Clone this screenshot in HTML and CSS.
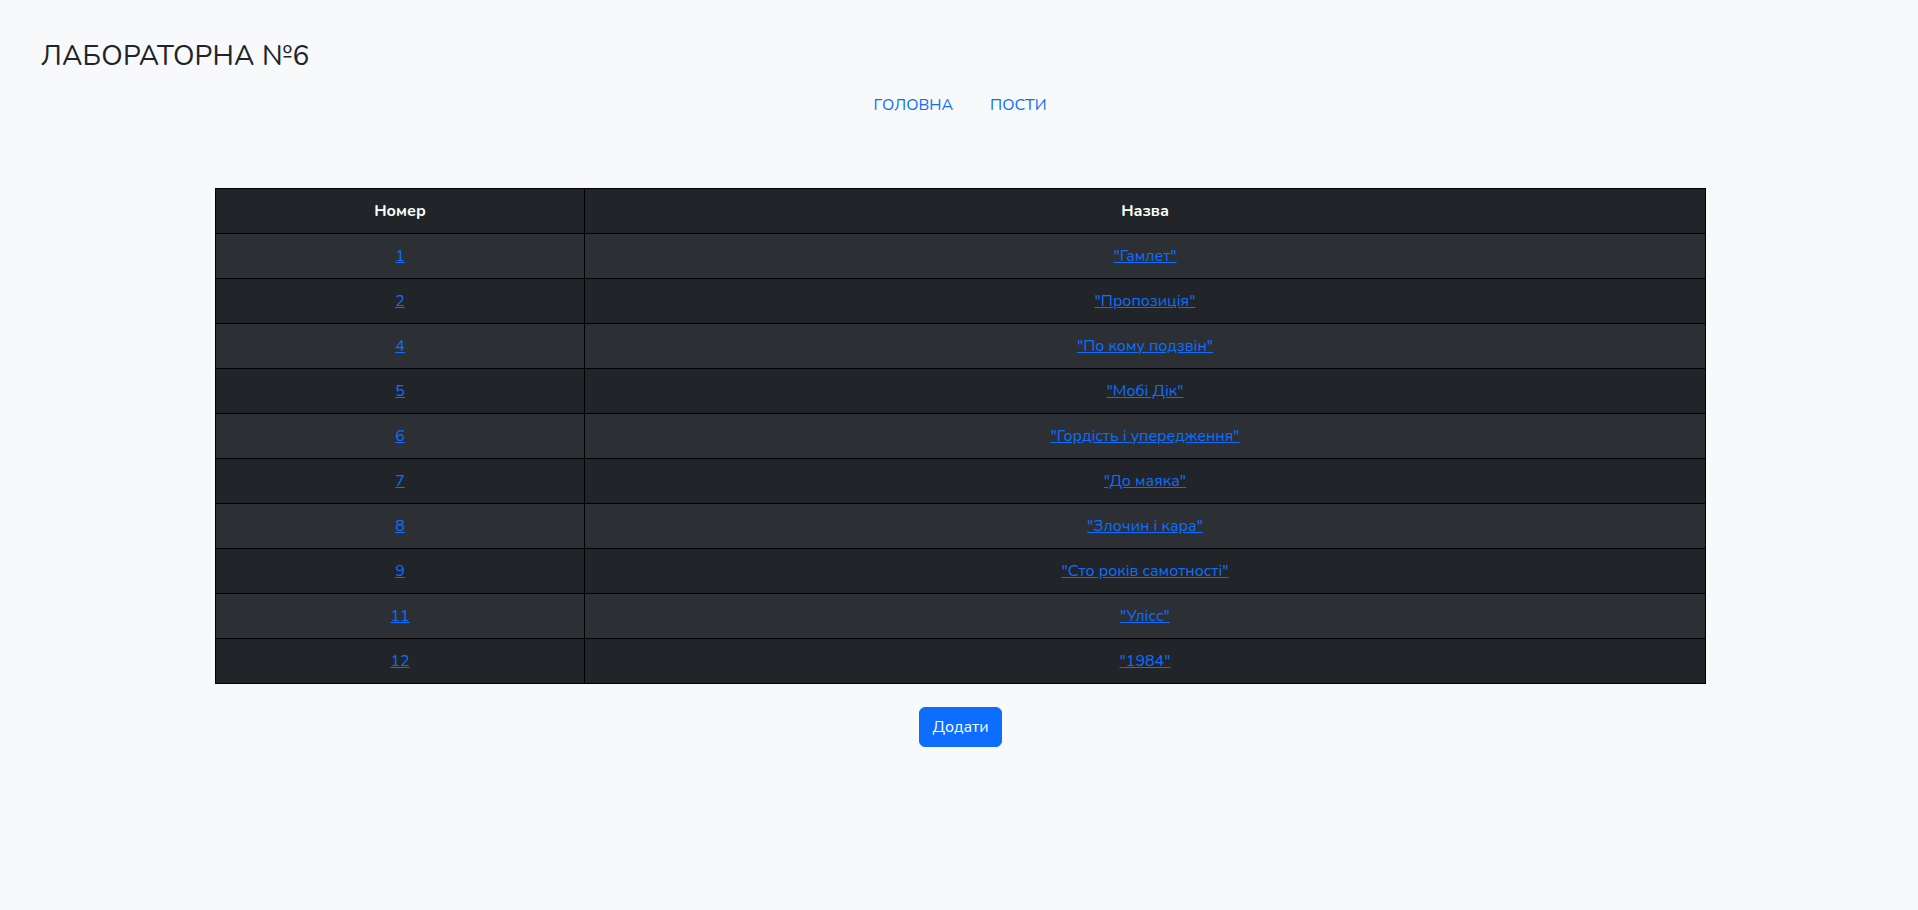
FILE: index.html
```html
<!DOCTYPE html>
<html lang="uk">
<head>
<meta charset="utf-8">
<title>Лабораторна №6</title>
<link rel="stylesheet" href="styles.css">
</head>
<body>
<header class="site-header">
  <h1 class="site-title">ЛАБОРАТОРНА №6</h1>
  <nav class="site-nav">
    <a class="nav-link" href="#">ГОЛОВНА</a>
    <a class="nav-link" href="#">ПОСТИ</a>
  </nav>
</header>
<main class="content">
  <table class="posts">
    <thead>
      <tr><th class="col-num">Номер</th><th>Назва</th></tr>
    </thead>
    <tbody>
      <tr><td><a href="#">1</a></td><td><a href="#">"Гамлет"</a></td></tr>
      <tr><td><a href="#">2</a></td><td><a href="#">"Пропозиція"</a></td></tr>
      <tr><td><a href="#">4</a></td><td><a href="#">"По кому подзвін"</a></td></tr>
      <tr><td><a href="#">5</a></td><td><a href="#">"Мобі Дік"</a></td></tr>
      <tr><td><a href="#">6</a></td><td><a href="#">"Гордість і упередження"</a></td></tr>
      <tr><td><a href="#">7</a></td><td><a href="#">"До маяка"</a></td></tr>
      <tr><td><a href="#">8</a></td><td><a href="#">"Злочин і кара"</a></td></tr>
      <tr><td><a href="#">9</a></td><td><a href="#">"Сто років самотності"</a></td></tr>
      <tr><td><a href="#">11</a></td><td><a href="#">"Улісс"</a></td></tr>
      <tr><td><a href="#">12</a></td><td><a href="#">"1984"</a></td></tr>
    </tbody>
  </table>
  <div class="actions">
    <button class="btn-add" type="button">Додати</button>
  </div>
</main>
</body>
</html>
```

FILE: styles.css
```css
html, body {
  margin: 0;
  padding: 0;
}
body {
  background: #f8f9fa;
  color: #212529;
  font-family: "Nunito", "Lato", "Noto Sans", sans-serif;
  font-size: 16px;
  line-height: 1.5;
  min-height: 910px;
}
.site-header {
  padding: 40px 41px 0;
}
.site-title {
  margin: 0;
  font-size: 28px;
  font-weight: 400;
  letter-spacing: 0.2px;
  line-height: 1.2;
  color: #212529;
}
.site-nav {
  display: flex;
  justify-content: center;
  gap: 37px;
  margin-top: 19px;
  padding-left: 2px;
}
.nav-link {
  color: #0d6efd;
  text-decoration: none;
  font-size: 16px;
  line-height: 24px;
}
.content {
  padding-top: 71px;
  padding-left: 3px;
}
.posts {
  width: 1491px;
  margin: 0 auto;
  border-collapse: collapse;
  border: 1px solid #000;
  color: #fff;
  text-align: center;
}
.posts th, .posts td {
  border: 1px solid #000;
  height: 45px;
  padding: 0 8px;
  box-sizing: border-box;
  vertical-align: middle;
}
.posts th {
  background: #212529;
  font-weight: 700;
}
.posts .col-num {
  width: 369px;
}
.posts tbody tr:nth-child(odd) td {
  background: #2c3034;
}
.posts tbody tr:nth-child(even) td {
  background: #212529;
}
.posts a {
  color: #0d6efd;
  text-decoration: underline;
}
.actions {
  display: flex;
  justify-content: center;
  margin-top: 23px;
}
.btn-add {
  background: #0d6efd;
  color: #fff;
  border: 1px solid #0d6efd;
  border-radius: 6px;
  font-family: inherit;
  font-size: 16px;
  line-height: 24px;
  padding: 7px 12px;
  cursor: pointer;
}
```
